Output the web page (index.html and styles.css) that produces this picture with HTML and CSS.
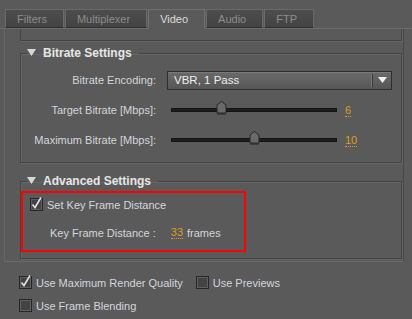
FILE: index.html
```html
<!DOCTYPE html>
<html lang="en">
<head>
    <meta charset="UTF-8">
    <title>Video Export Settings</title>
    <link rel="stylesheet" href="styles.css">
</head>
<body>
    <div class="tabs">
        <div class="tab">Filters</div>
        <div class="tab">Multiplexer</div>
        <div class="tab active">Video</div>
        <div class="tab">Audio</div>
        <div class="tab">FTP</div>
    </div>

    <div class="scroll">
        <div class="group-tail"></div>

        <fieldset class="group">
            <legend><svg class="twisty" width="9" height="7" viewBox="0 0 9 7"><path d="M0 0H9L4.5 7Z"/></svg>Bitrate Settings</legend>
            <div class="form-grid">
                <label class="field-label">Bitrate Encoding:</label>
                <div class="select">
                    <span class="select-text">VBR, 1 Pass</span>
                    <span class="select-arrow"><svg width="9" height="6" viewBox="0 0 9 6"><path d="M0 0H9L4.5 6Z"/></svg></span>
                </div>

                <label class="field-label">Target Bitrate [Mbps]:</label>
                <div class="slider-row">
                    <div class="track">
                        <svg class="thumb" style="left: 44px" width="11" height="15" viewBox="0 0 11 15"><path class="thumb-shadow" d="M1 5L5.5 1L10 5V14H1Z"/><path d="M1 4L5.5 0.5L10 4V12H1Z"/></svg>
                    </div>
                    <span class="value">6</span>
                </div>

                <label class="field-label">Maximum Bitrate [Mbps]:</label>
                <div class="slider-row">
                    <div class="track">
                        <svg class="thumb" style="left: 77px" width="11" height="15" viewBox="0 0 11 15"><path class="thumb-shadow" d="M1 5L5.5 1L10 5V14H1Z"/><path d="M1 4L5.5 0.5L10 4V12H1Z"/></svg>
                    </div>
                    <span class="value">10</span>
                </div>
            </div>
        </fieldset>

        <fieldset class="group advanced">
            <legend><svg class="twisty" width="9" height="7" viewBox="0 0 9 7"><path d="M0 0H9L4.5 7Z"/></svg>Advanced Settings</legend>
            <div class="highlight">
                <div class="check-row">
                    <span class="checkbox checked"><svg width="13" height="14" viewBox="0 0 13 14"><path d="M2.5 7.5L5 10.5L11 0.5"/></svg></span>
                    <span>Set Key Frame Distance</span>
                </div>
                <div class="kf-row">
                    <span>Key Frame Distance :</span>
                    <span class="value">33</span>
                    <span>frames</span>
                </div>
            </div>
        </fieldset>
    </div>

    <div class="options">
        <div class="options-row">
            <div class="check-row">
                <span class="checkbox checked"><svg width="13" height="14" viewBox="0 0 13 14"><path d="M2.5 7.5L5 10.5L11 0.5"/></svg></span>
                <span>Use Maximum Render Quality</span>
            </div>
            <div class="check-row">
                <span class="checkbox"></span>
                <span>Use Previews</span>
            </div>
        </div>
        <div class="check-row">
            <span class="checkbox"></span>
            <span>Use Frame Blending</span>
        </div>
    </div>
</body>
</html>
```

FILE: styles.css
```css
/* Dark export panel */
body {
    margin: 0;
    width: 412px;
    height: 319px;
    overflow: hidden;
    background-color: #5a5a5a;
    font-family: "Liberation Sans", Arial, sans-serif;
    font-size: 11px;
    color: #d3d6dc;
}
.tabs {
    display: flex;
    gap: 1px;
    padding: 9px 0 0 5px;
    height: 19px;
    border-bottom: 1px solid #6c6c6c;
}
.tab {
    padding: 0 16px 0 11px;
    line-height: 18px;
    color: #8d8d8d;
    font-size: 11px;
    background: linear-gradient(#4d4d4d, #434343);
    border: 1px solid #6a6a6a;
    border-bottom: 1px solid #303030;
    box-sizing: border-box;
    height: 19px;
}
.tab.active {
    height: 20px;
    margin-bottom: -1px;
    background: #5a5a5a;
    color: #dcdcdc;
    border-color: #707070;
    border-bottom-color: #5a5a5a;
}
.scroll {
    margin: 0 8px 0 4px;
    height: 232px;
    overflow: hidden;
    padding-left: 15px;
    border-left: 1px solid #656565;
    border-right: 1px solid #474747;
    border-bottom: 1px solid #6a6a6a;
}
.group-tail {
    height: 11px;
    border: 1px solid #444;
    border-top: none;
    margin-right: 1px;
    box-shadow: 1px 1px 0 #666;
}
.group {
    margin: 5px 1px 0 0;
    padding: 0 0 7px 0;
    border: 1px solid #444;
    box-shadow: 1px 1px 0 #666, inset 1px 1px 0 #666;
}
.group legend {
    margin-left: 6px;
    padding: 0 7px 0 0;
    font-size: 12px;
    font-weight: bold;
    color: #e6e6e6;
}
.twisty {
    fill: #d8d8d8;
    margin-right: 7px;
    vertical-align: 1px;
}
.form-grid {
    display: grid;
    grid-template-columns: 135px 1fr;
    grid-auto-rows: 30px;
    column-gap: 11px;
    align-items: center;
    margin-top: 5px;
}
.field-label {
    text-align: right;
}
.select {
    display: flex;
    align-items: center;
    height: 19px;
    width: 225px;
    box-sizing: border-box;
    border: 1px solid #2e2e2e;
    background: linear-gradient(#6a6a6a, #565656);
    box-shadow: inset 0 1px 0 #7a7a7a;
    color: #eceff3;
}
.select-text {
    flex: 1;
    padding-left: 6px;
    font-size: 11.5px;
}
.select-arrow {
    width: 18px;
    height: 13px;
    display: flex;
    align-items: center;
    justify-content: center;
    border-left: 1px solid #3a3a3a;
    box-shadow: -1px 0 0 #777;
    fill: #f0f0f0;
}
.slider-row {
    display: flex;
    align-items: center;
    gap: 8px;
    padding-left: 4px;
}
.track {
    position: relative;
    width: 166px;
    height: 4px;
    box-sizing: border-box;
    background-color: #1e1e1e;
    border: 1px solid #141414;
}
.thumb {
    position: absolute;
    top: -8px;
    fill: #6a6a6a;
    stroke: #262626;
    stroke-width: 1;
}
.thumb .thumb-shadow {
    fill: #3e3e3e;
    stroke: none;
}
.value {
    color: #d99f1c;
    border-bottom: 1px dotted #d99f1c;
    line-height: 12px;
}
.advanced {
    margin-top: 11px;
    padding-bottom: 6px;
}
.highlight {
    width: 225px;
    margin-top: 3px;
    padding: 5px 0 11px 7px;
    border: 2px solid #ff0000;
    box-sizing: border-box;
}
.check-row {
    display: flex;
    align-items: center;
    gap: 4px;
}
.checkbox {
    position: relative;
    width: 13px;
    height: 13px;
    box-sizing: border-box;
    border: 1px solid #262626;
    background-color: #434343;
    box-shadow: inset 0 0 0 1px #5f5f5f;
}
.checkbox svg {
    position: absolute;
    left: -1px;
    top: -2px;
    fill: none;
    stroke: #e2e2e2;
    stroke-width: 1.6;
}
.kf-row {
    display: flex;
    align-items: center;
    margin-top: 15px;
    padding-left: 20px;
}
.kf-row .value {
    margin: 0 4px 0 15px;
}
.options {
    display: flex;
    flex-direction: column;
    gap: 10px;
    padding: 14px 0 0 19px;
}
.options-row {
    display: flex;
    gap: 13px;
}
```
